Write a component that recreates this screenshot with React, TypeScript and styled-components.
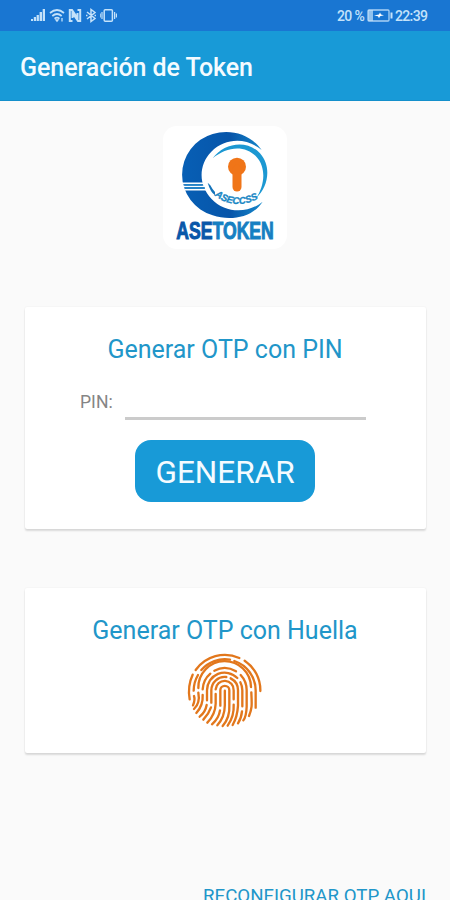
import React from "react";
import styled, { createGlobalStyle } from "styled-components";

const GlobalStyle = createGlobalStyle`
  * { box-sizing: border-box; }
  html, body { margin: 0; padding: 0; background: #fafafa; }
  body { font-family: Roboto, "Liberation Sans", sans-serif; overflow: hidden; }
`;

const Screen = styled.div`
  display: flex;
  flex-direction: column;
  width: 450px;
  height: 900px;
  overflow: hidden;
  background: #fafafa;
`;

const StatusBar = styled.header`
  display: flex;
  flex: none;
  justify-content: space-between;
  align-items: center;
  height: 31px;
  padding: 0 22px 0 30px;
  background: #1976d2;
  color: #c4e2fa;
`;

const StatusGroup = styled.div<{ $gap: number }>`
  display: flex;
  align-items: center;
  gap: ${(p) => p.$gap}px;
`;

const StatusText = styled.span<{ $width: number }>`
  width: ${(p) => p.$width}px;
  padding-top: 1px;
  font-size: 14px;
  font-weight: 500;
  letter-spacing: -0.65px;
  line-height: 30px;
  white-space: nowrap;
`;

const AppBar = styled.div`
  display: flex;
  flex: none;
  align-items: center;
  height: 70px;
  padding: 4px 20px 0;
  background: #189ad7;
  border-bottom: 1px solid #148fcb;
`;

const AppTitle = styled.h1`
  margin: 0;
  color: #f4fbff;
  font-size: 25px;
  font-weight: 500;
  letter-spacing: -0.07px;
  line-height: 32px;
  white-space: nowrap;
`;

const Content = styled.main`
  display: flex;
  flex-direction: column;
  align-items: center;
  padding: 25px 24px 0 25px;
`;

const LogoTile = styled.div`
  width: 124px;
  height: 123px;
  margin-right: 2px;
  border-radius: 14px;
  background: #fff;
`;

const Card = styled.section<{ $height: number; $top: number }>`
  display: flex;
  flex: none;
  flex-direction: column;
  align-items: center;
  width: 401px;
  height: ${(p) => p.$height}px;
  margin-top: ${(p) => p.$top}px;
  padding: 27px 1px 0 0;
  border-radius: 2px;
  background: #fff;
  box-shadow: 0 2px 2px rgba(0, 0, 0, 0.13), 0 0 2px rgba(0, 0, 0, 0.07);
`;

const CardTitle = styled.h2`
  margin: 0;
  color: #2196c9;
  font-size: 25px;
  font-weight: 400;
  line-height: 32px;
  white-space: nowrap;
`;

const PinRow = styled.label`
  display: flex;
  align-items: flex-end;
  gap: 12px;
  width: 286px;
  margin: 21px 4px 0 0;
`;

const PinLabel = styled.span`
  width: 33px;
  padding-bottom: 7px;
  color: #858585;
  font-size: 17.6px;
  line-height: 22px;
`;

const PinInput = styled.input`
  width: 241px;
  height: 33px;
  padding: 0 4px;
  border: 0;
  border-bottom: 3px solid #cbcbcb;
  outline: 0;
  background: transparent;
  font: inherit;
`;

const GenerateButton = styled.button`
  width: 180px;
  height: 62px;
  margin-top: 20px;
  padding: 3px 0 0;
  border: 0;
  border-radius: 16px;
  background: #189ad7;
  color: #f4fbff;
  font: 400 31.5px/40px Roboto, sans-serif;
`;

const FingerprintButton = styled.button`
  display: flex;
  margin-top: -2px;
  padding: 0;
  border: 0;
  background: none;
`;

const ReconfigureLink = styled.a`
  align-self: flex-end;
  margin-top: 130px;
  color: #2196c9;
  font-size: 18.7px;
  line-height: 26px;
  white-space: nowrap;
`;

const SignalIcon = () => (
  <svg width="16" height="15" viewBox="0 0 16 15" fill="currentColor">
    <path d="M1 11h2v2H1zM3.8 9h2.2v4H3.8zM6.6 7h2.3v6H6.6zM9.6 4H12v9H9.6zM12.7 1H15v12h-2.3z" />
  </svg>
);

const WifiIcon = () => (
  <svg width="16" height="15" viewBox="0 0 16 15" fill="none" stroke="currentColor" strokeWidth="1.7">
    <path d="M1 5q7-6 14 0M3.3 8q4.7-4 9.4 0M5.5 10.7q2.5-2 5 0" />
    <path d="M7 12h2l-1 1.2zM13 10v3.5" strokeWidth="1.3" />
  </svg>
);

const NfcIcon = () => (
  <svg width="14" height="15" viewBox="0 0 14 15" fill="none" stroke="currentColor" strokeWidth="2">
    <path d="M4.5 13H1.8V2H4l5.5 8V5M9.5 2h2.7v11H10L4.5 5v5" />
  </svg>
);

const BluetoothIcon = () => (
  <svg width="12" height="15" viewBox="0 0 12 15" fill="none" stroke="currentColor" strokeWidth="1.5">
    <path d="M2 4l8 6.5-4 3V1.5l4 3L2 11M1 7.5h1.5M9.5 7.5H11" />
  </svg>
);

const VibrateIcon = () => (
  <svg width="17" height="15" viewBox="0 0 17 15" fill="none" stroke="currentColor" strokeWidth="1.5">
    <rect x="4.2" y="1.7" width="8.2" height="11.6" rx="1" />
    <path d="M2 4v7M.2 5.5v4M14.6 4v7M16.4 5.5v4" strokeWidth="1.2" />
  </svg>
);

const BatteryIcon = () => (
  <svg width="26" height="13" viewBox="0 0 26 13" fill="none" stroke="currentColor">
    <rect x="1" y="1" width="21" height="11" rx="1" strokeWidth="1.3" opacity=".85" />
    <path d="M1 1h5v11H1z" fill="currentColor" stroke="none" opacity=".7" />
    <path d="M7 6.5l5-1 1-2 1 2 3 .8-4 1-1 2-1-2z" fill="#fff" stroke="none" />
    <path d="M24.5 3.5v6" strokeWidth="2" />
  </svg>
);

const Logo = () => (
  <svg width="124" height="123" viewBox="24 30 372 369">
    <defs>
      <linearGradient id="crescent" x1="0" x2="1">
        <stop offset="0" stopColor="#075fb5" />
        <stop offset=".6" stopColor="#0755a9" />
        <stop offset="1" stopColor="#1689cb" />
      </linearGradient>
      <path id="bandText" d="M175 236Q248 294 336 232" />
    </defs>
    <path
      d="M320 102C285 53 225 38 173 54A127 127 0 0 0 173 298C228 316 293 304 323 257C280 293 211 293 169 248C130 207 130 147 169 107C211 65 275 64 320 102Z"
      fill="url(#crescent)"
    />
    <path d="M80 202h67M84 211h67M88 221h65" stroke="#fff" strokeWidth="5" />
    <path d="M88 207h55M90 216h60" stroke="#1d83c6" strokeWidth="4" />
    <path
      d="M173 127C207 79 278 70 315 112C350 151 341 212 303 247C330 207 334 154 304 122C270 86 215 91 173 127Z"
      fill="#1c98d2"
    />
    <path d="M158 200Q166 228 180 238L180 228Q172 220 166 208Z" fill="#1473ba" />
    <circle cx="246" cy="152" r="27" fill="#f07518" />
    <path d="M246 160v53" stroke="#f07518" strokeWidth="27" strokeLinecap="round" />
    <text
      fill="#1b88c5"
      stroke="#1b88c5"
      strokeWidth="1"
      fontFamily="Liberation Sans, sans-serif"
      fontSize="29"
      fontWeight="700"
      fontStyle="italic"
    >
      <textPath href="#bandText" startOffset="4">
        ASECCSS
      </textPath>
    </text>
    <text
      transform="translate(64 368) scale(.755 1)"
      fontFamily="Liberation Sans, sans-serif"
      fontSize="70"
      fontWeight="700"
      strokeWidth="3"
    >
      <tspan fill="#0957a9" stroke="#0957a9">ASE</tspan>
      <tspan fill="#167fc2" stroke="#167fc2">TOKEN</tspan>
    </text>
  </svg>
);

const ridges = [
  "M47 75A107 107 0 0 1 178 39",
  "M194 47A107 107 0 0 1 241 138",
  "M38 89Q22 123 29 163",
  "M64 75A93 93 0 0 1 150 44",
  "M163 48A93 93 0 0 1 227 136V188",
  "M54 90A93 93 0 0 0 41 137",
  "M42 153Q46 164 39 181",
  "M55 129A79 79 0 0 1 213 126",
  "M214 142C215 174 218 187 207 213",
  "M55 143Q61 174 42 192",
  "M68 133A66 66 0 0 1 91 86",
  "M103 77A66 66 0 0 1 168 79",
  "M182 90A66 66 0 0 1 200 136V185Q199 214 190 226",
  "M68 150Q70 181 49 204",
  "M81 166V136A53 53 0 0 1 172 99",
  "M80 180Q76 202 59 215",
  "M181 112A53 53 0 0 1 187 136V184",
  "M186 199Q184 220 174 235",
  "M94 173V136A40 40 0 0 1 139 96",
  "M93 187Q86 207 70 224",
  "M152 100A40 40 0 0 1 174 136V182Q172 216 158 240",
  "M107 133A27 27 0 0 1 161 136V163",
  "M107 147V176Q106 208 82 233",
  "M161 179Q163 214 143 242",
  "M121 182V136A13.5 13.5 0 0 1 148 136V180C150 210 141 228 128 243",
  "M120 196Q117 219 96 238",
  "M134.5 137V181Q134 217 112 241",
];

const Fingerprint = () => (
  <svg width="90" height="90" viewBox="0 0 270 270" fill="none" stroke="#e2771c" strokeWidth="7" strokeLinecap="round">
    {ridges.map((d) => (
      <path key={d} d={d} />
    ))}
  </svg>
);

export default function App() {
  return (
    <Screen>
      <GlobalStyle />
      <StatusBar>
        <StatusGroup $gap={3}>
          <SignalIcon />
          <WifiIcon />
          <NfcIcon />
          <BluetoothIcon />
          <VibrateIcon />
        </StatusGroup>
        <StatusGroup $gap={2}>
          <StatusText $width={28}>20 %</StatusText>
          <BatteryIcon />
          <StatusText $width={33}>22:39</StatusText>
        </StatusGroup>
      </StatusBar>
      <AppBar>
        <AppTitle>Generación de Token</AppTitle>
      </AppBar>
      <Content>
        <LogoTile>
          <Logo />
        </LogoTile>
        <Card $height={222} $top={58}>
          <CardTitle>Generar OTP con PIN</CardTitle>
          <PinRow>
            <PinLabel>PIN:</PinLabel>
            <PinInput aria-label="PIN" />
          </PinRow>
          <GenerateButton>GENERAR</GenerateButton>
        </Card>
        <Card $height={165} $top={59}>
          <CardTitle>Generar OTP con Huella</CardTitle>
          <FingerprintButton aria-label="Huella">
            <Fingerprint />
          </FingerprintButton>
        </Card>
        <ReconfigureLink>RECONFIGURAR OTP AQUI</ReconfigureLink>
      </Content>
    </Screen>
  );
}
